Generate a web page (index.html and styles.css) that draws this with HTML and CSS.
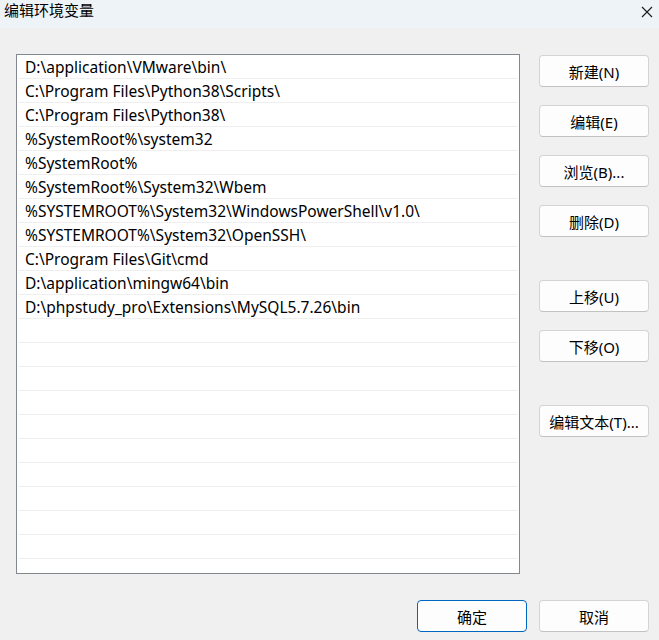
FILE: index.html
```html
<!DOCTYPE html>
<html lang="zh-CN">
<head>
    <meta charset="UTF-8">
    <meta name="viewport" content="width=device-width, initial-scale=1.0">
    <title>编辑环境变量</title>
    <link rel="stylesheet" href="styles.css">
</head>
<body>
    <div class="window">
        <div class="titlebar">
            <span class="title">编辑环境变量</span>
            <svg class="close" width="12" height="12" viewBox="0 0 12 12">
                <path d="M1 1 L11 11 M11 1 L1 11" stroke="#1a1a1a" stroke-width="1.1" fill="none"/>
            </svg>
        </div>

        <div class="content">
            <div class="path-list" id="pathList"></div>

            <div class="side-buttons">
                <div class="btn-group">
                    <button class="btn">新建(N)</button>
                    <button class="btn">编辑(E)</button>
                    <button class="btn">浏览(B)...</button>
                    <button class="btn">删除(D)</button>
                </div>
                <div class="btn-group">
                    <button class="btn">上移(U)</button>
                    <button class="btn">下移(O)</button>
                </div>
                <div class="btn-group">
                    <button class="btn">编辑文本(T)...</button>
                </div>
            </div>
        </div>

        <div class="footer">
            <button class="btn btn-primary">确定</button>
            <button class="btn">取消</button>
        </div>
    </div>

    <script>
        'use strict';

        // PATH entries
        const paths = [
            'D:\\application\\VMware\\bin\\',
            'C:\\Program Files\\Python38\\Scripts\\',
            'C:\\Program Files\\Python38\\',
            '%SystemRoot%\\system32',
            '%SystemRoot%',
            '%SystemRoot%\\System32\\Wbem',
            '%SYSTEMROOT%\\System32\\WindowsPowerShell\\v1.0\\',
            '%SYSTEMROOT%\\System32\\OpenSSH\\',
            'C:\\Program Files\\Git\\cmd',
            'D:\\application\\mingw64\\bin',
            'D:\\phpstudy_pro\\Extensions\\MySQL5.7.26\\bin'
        ];

        const pathList = document.getElementById('pathList');
        const totalRows = 22;

        for (let i = 0; i < totalRows; i++) {
            const row = document.createElement('div');
            row.className = 'path-row';
            row.textContent = paths[i] || '';
            pathList.appendChild(row);
        }
    </script>
</body>
</html>
```

FILE: styles.css
```css
body {
    margin: 0;
    font-family: "Noto Sans", "Noto Sans CJK SC", sans-serif;
    font-size: 15px;
    color: #000;
    background: #f0f0f0;
    overflow: hidden;
}

.window {
    width: 659px;
    height: 640px;
    display: flex;
    flex-direction: column;
}

.titlebar {
    height: 28px;
    background: #eef3f8;
    display: flex;
    align-items: center;
    justify-content: space-between;
    padding: 0 6px 0 4px;
    flex-shrink: 0;
}

.title {
    font-size: 15px;
    color: #000;
    margin-top: -9px;
}

.close {
    margin-top: -4px;
}

.content {
    display: flex;
    padding: 26px 10px 0 16px;
    gap: 19px;
}

.path-list {
    width: 502px;
    height: 518px;
    border: 1px solid #828790;
    background: #fff;
    overflow: hidden;
}

.path-row {
    height: 23px;
    line-height: 24px;
    font-size: 15.5px;
    border-bottom: 1px solid #efefef;
    margin: 0 1px;
    padding-left: 7px;
    white-space: nowrap;
}

.side-buttons {
    display: flex;
    flex-direction: column;
    gap: 43px;
    padding-top: 1px;
}

.btn-group {
    display: flex;
    flex-direction: column;
    gap: 18px;
}

.btn {
    width: 110px;
    height: 32px;
    padding: 0;
    font-family: "Noto Sans", "Noto Sans CJK SC", sans-serif;
    font-size: 15px;
    color: #000;
    background: #fdfdfd;
    border: 1px solid #d4d4d4;
    border-bottom-color: #c2c2c2;
    border-radius: 4px;
}

.btn-primary {
    border: 1px solid #0067c0;
}

.footer {
    display: flex;
    justify-content: flex-end;
    gap: 12px;
    padding: 26px 10px 0 0;
}
```
